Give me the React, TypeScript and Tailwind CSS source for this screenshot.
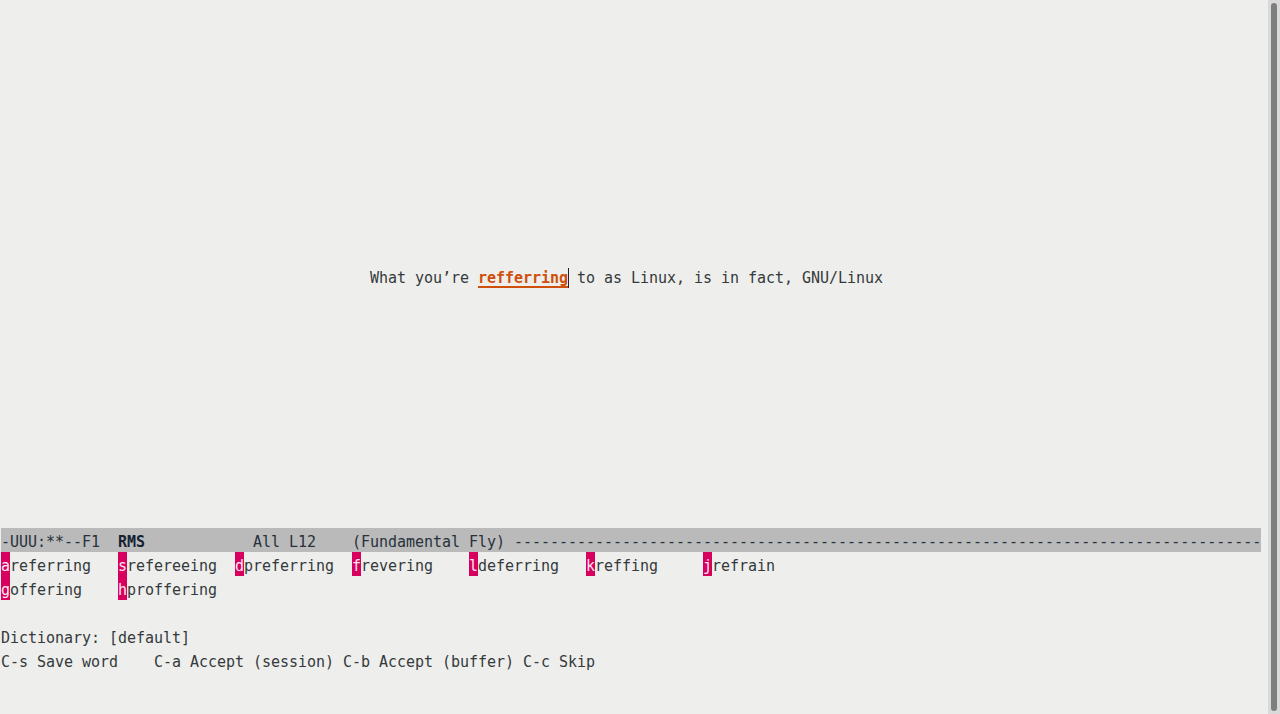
import React from "react";

const mono = "font-['DejaVu_Sans_Mono','Liberation_Mono',monospace] text-[15px] leading-7 tracking-[-0.03px]";

const row1 = [
    {key: "a", word: "referring"},
    {key: "s", word: "refereeing"},
    {key: "d", word: "preferring"},
    {key: "f", word: "revering"},
    {key: "l", word: "deferring"},
    {key: "k", word: "reffing"},
    {key: "j", word: "refrain"},
]

const row2 = [
    {key: "g", word: "offering"},
    {key: "h", word: "proffering"},
]

function Candidate({k, word}: { k: string, word: string }) {
    return (
        <div className="w-[117px] h-6 flex shrink-0">
            <span className="bg-[#d7005f] text-[#fde8ef] w-[9px] flex justify-center">{k}</span>
            <span>{word}</span>
        </div>
    )
}

export default function App() {
    return (
        <div className={`h-[714px] w-[1280px] bg-[#eeeeec] text-[#343a3c] flex overflow-hidden ${mono}`}>
            <div className="flex-1 flex flex-col min-w-0 pl-px">
                {/* buffer */}
                <div className="h-[528px] pt-[264px] pl-[369px] whitespace-pre">
                    <div className="h-6">
                        <span>What you’re </span>
                        <span className="font-bold text-[#cf4f0c] underline decoration-[#cf4f0c] decoration-[1.5px] underline-offset-[3px]">refferring</span>
                        <span className="inline-block w-px h-[20px] bg-[#222] align-[-5px] -mr-px"></span>
                        <span> to as Linux, is in fact, GNU/Linux</span>
                    </div>
                </div>

                {/* mode line */}
                <div className="h-6 w-[1260px] bg-[#bababa] text-[#27323c] whitespace-pre overflow-hidden">
                    <span>-UUU:**--F1  </span>
                    <span className="font-bold text-[#142233]">RMS</span>
                    <span>            All L12    (Fundamental Fly) {"-".repeat(160)}</span>
                </div>

                {/* minibuffer */}
                <div className="flex flex-col">
                    <div className="flex">
                        {row1.map(c => <Candidate key={c.key} k={c.key} word={c.word}/>)}
                    </div>
                    <div className="flex">
                        {row2.map(c => <Candidate key={c.key} k={c.key} word={c.word}/>)}
                    </div>
                    <div className="h-6"></div>
                    <div className="h-6 whitespace-pre">Dictionary: [default]</div>
                    <div className="h-6 whitespace-pre">C-s Save word    C-a Accept (session) C-b Accept (buffer) C-c Skip</div>
                </div>
            </div>

            {/* scrollbar */}
            <div className="w-3 bg-[#d9d9d9] flex justify-center py-[3px] shrink-0">
                <div className="w-[6px] h-full rounded-full bg-[#7b7f7f]"></div>
            </div>
        </div>
    )
}
